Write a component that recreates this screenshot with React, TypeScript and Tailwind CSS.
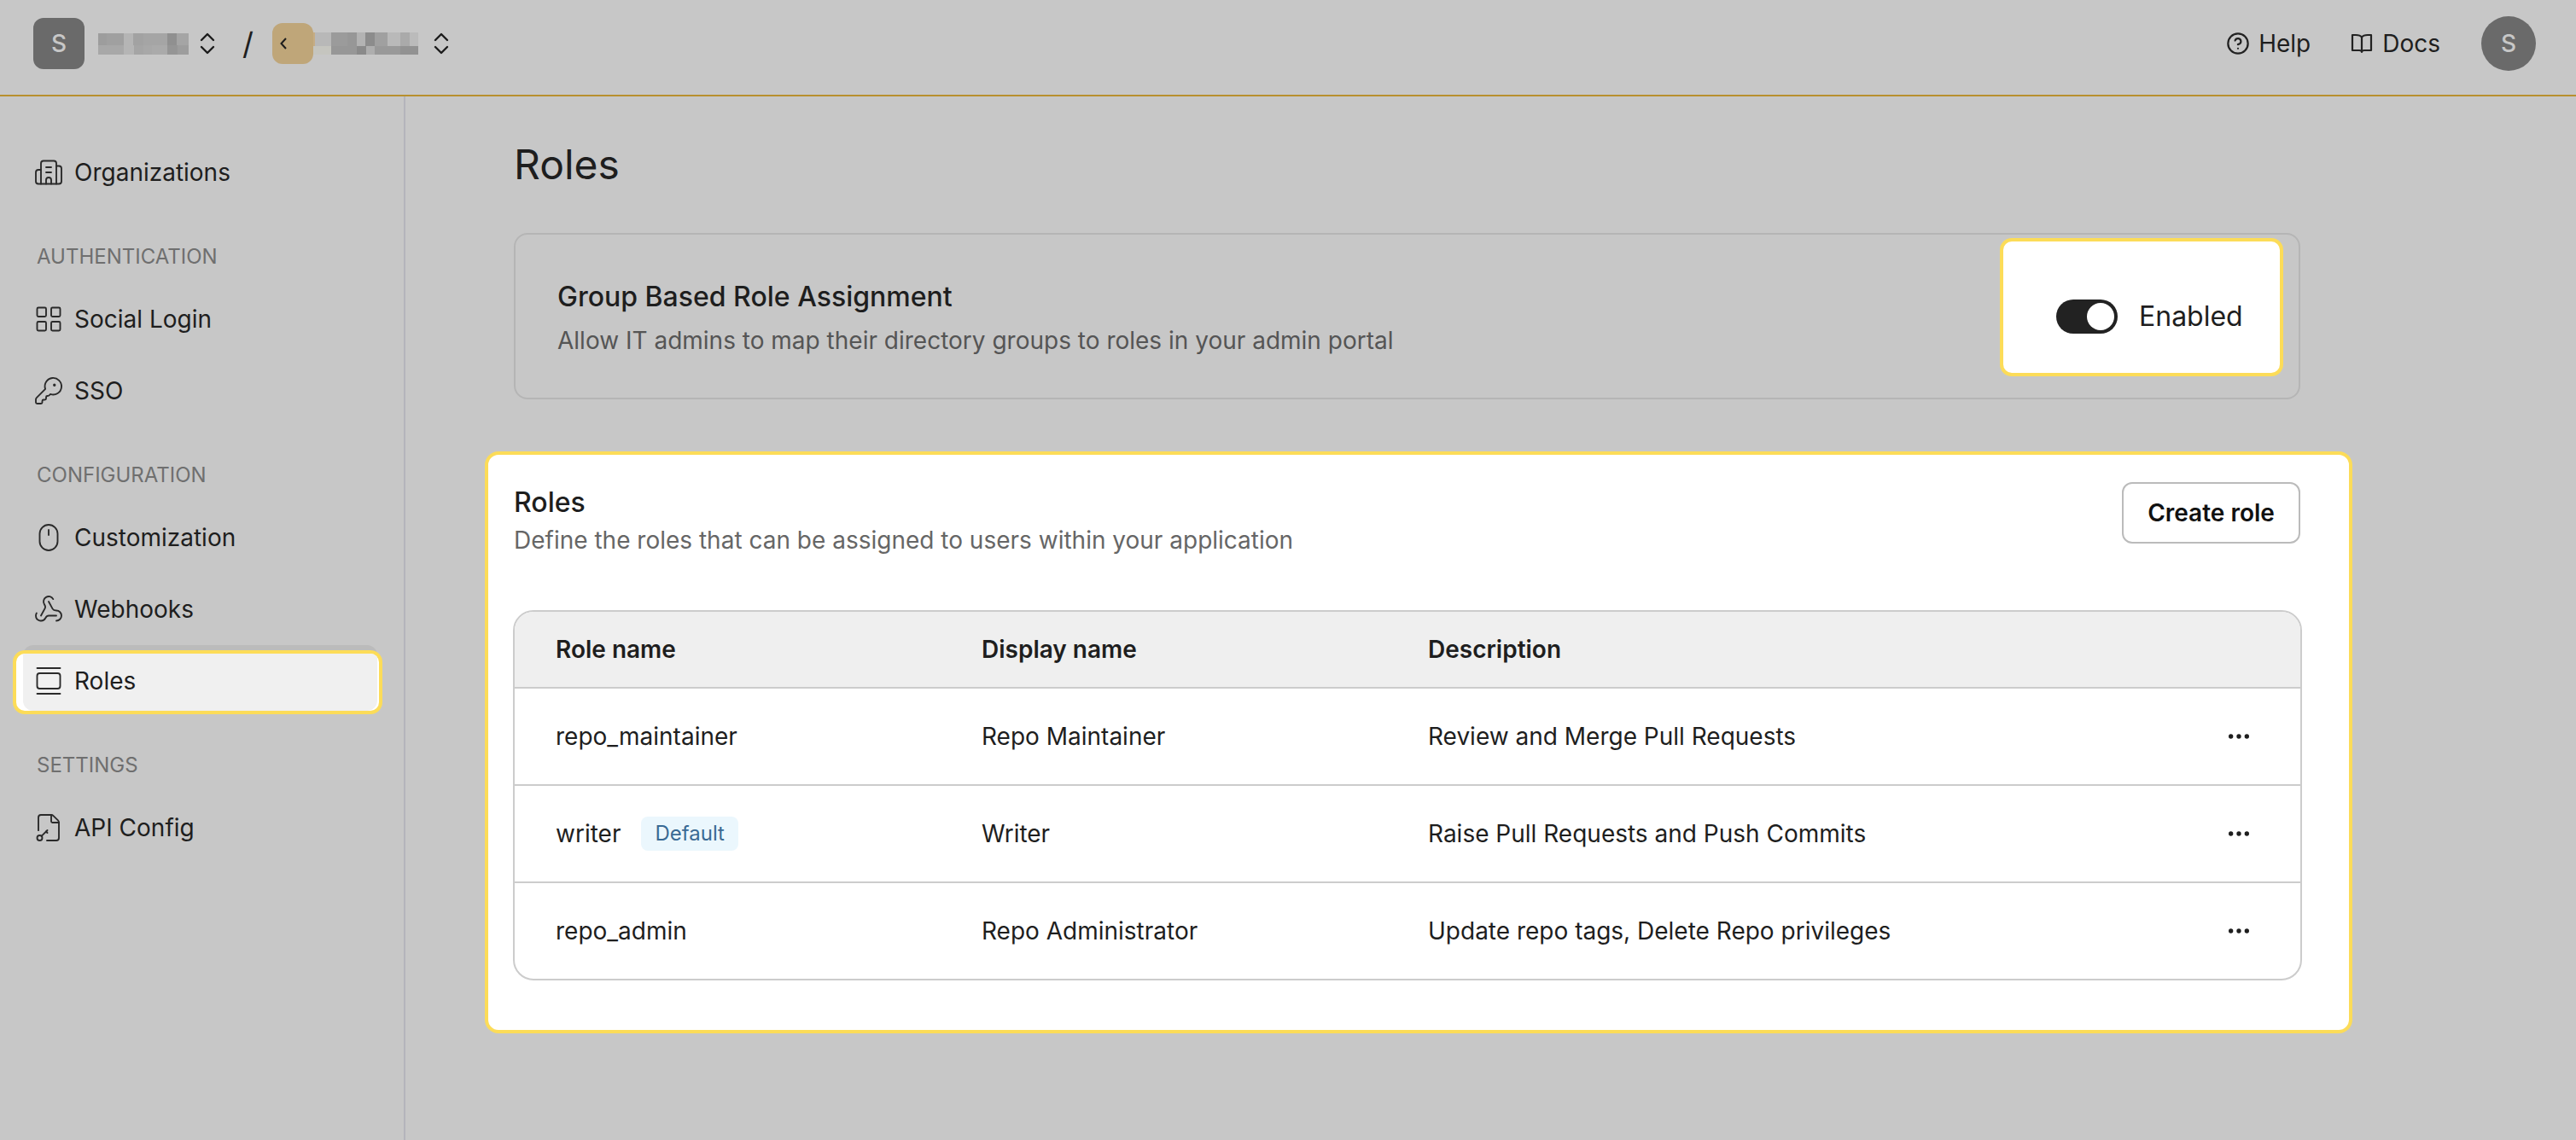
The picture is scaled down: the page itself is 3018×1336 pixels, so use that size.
import React from 'react';
import {
  Building2,
  LayoutGrid,
  KeyRound,
  Mouse,
  Webhook,
  GalleryVertical,
  FileKey2,
  CircleHelp,
  Ellipsis,
} from 'lucide-react';

const orgBlocks = [
  [[10, '#9d9d9d'], [20, '#a0a0a0'], [11, '#b5b5b5'], [12, '#a2a2a2'], [28, '#a5a5a5'], [11, '#909090'], [14, '#a5a5a5']],
  [[30, '#a8a8a8'], [12, '#b5b5b5'], [11, '#a5a5a5'], [10, '#a8a8a8'], [18, '#aaaaaa'], [12, '#959595'], [13, '#9d9d9d']],
] as [number, string][][];

const projectBlocks = [
  [[18, '#ae9468'], [14, '#c5ac84'], [19, '#b8b8b8'], [19, '#9b9b9b'], [11, '#979797'], [10, '#b3b3b3'], [11, '#8c8c8c'], [15, '#a0a0a0'], [15, '#b9b9b9'], [11, '#aaaaaa'], [10, '#bbbbbb']],
  [[29, '#ae9468'], [22, '#c5c5bf'], [30, '#979797'], [11, '#8a8a8a'], [10, '#aeaeae'], [30, '#999999'], [21, '#929292']],
] as [number, string][][];

const Mosaic = ({ rows, width, split, height }: { rows: [number, string][][]; width: number; split: number; height: number }) => (
  <svg width={width} height={height} className="block shrink-0">
    {rows.map((row, r) => {
      let x = 0;
      return row.map(([w, color], i) => {
        const rect = <rect key={`${r}-${i}`} x={x} y={r === 0 ? 0 : split} width={w} height={r === 0 ? split : height - split} fill={color} />;
        x += w;
        return rect;
      });
    })}
  </svg>
);

const UpDown = () => (
  <svg width="18" height="26" viewBox="0 0 18 26" fill="none" stroke="#1c1c1c" strokeWidth="2.4" strokeLinecap="round" strokeLinejoin="round" className="shrink-0">
    <path d="M2 9l7-7 7 7" />
    <path d="M2 17l7 7 7-7" />
  </svg>
);

const DocsIcon = () => (
  <svg width="26" height="24" viewBox="0 0 26 24" fill="none" stroke="#222" strokeWidth="2.2" strokeLinejoin="round" className="shrink-0">
    <path d="M13 4.5C11.5 2.5 9 2 6 2H2v18h8c1.5 0 3 .5 3 2 0-1.5 1.5-2 3-2h8V2h-4c-3 0-5.5.5-7 2.5Z" />
    <path d="M13 4.5V21" />
  </svg>
);

const NavItem = ({ icon: Icon, label }: { icon: any; label: string }) => (
  <div className="flex h-[76px] items-center gap-[12px] rounded-xl px-3 text-[28px] text-[#1e1e1e]">
    <Icon size={36} strokeWidth={1.25} className="shrink-0 text-[#2a2a2a]" />
    <span>{label}</span>
  </div>
);

const NavLabel = ({ children }: { children: React.ReactNode }) => (
  <div className="mt-[45px] mb-[19px] pl-4 text-[24px] leading-8 text-[#6f6f6f]">{children}</div>
);

const ActiveItem = () => (
  <div className="relative mt-2 h-[76px]">
    <div className="absolute inset-x-0 -top-1 h-[76px] rounded-xl bg-[#bbbbbb]" />
    <div className="absolute -left-3 top-[2px] h-[75px] w-[433px] overflow-hidden rounded-[14px] border-4 border-[#fcdc58] bg-white">
      <div className="absolute inset-y-0 left-2 right-[2px] rounded-b-xl bg-[#f0f0f0]" />
    </div>
    <div className="relative flex h-full items-center gap-[12px] px-3 text-[28px] text-[#1e1e1e]">
      <GalleryVertical size={36} strokeWidth={1.25} className="shrink-0 text-[#2a2a2a]" />
      <span>Roles</span>
    </div>
  </div>
);

const Sidebar = () => (
  <aside className="w-[475px] shrink-0 border-r-2 border-[#b4b4bb] pt-[51px] pl-[27px] pr-[31px]">
    <NavItem icon={Building2} label="Organizations" />
    <NavLabel>AUTHENTICATION</NavLabel>
    <div className="flex flex-col gap-2">
      <NavItem icon={LayoutGrid} label="Social Login" />
      <NavItem icon={KeyRound} label="SSO" />
    </div>
    <NavLabel>CONFIGURATION</NavLabel>
    <div className="flex flex-col gap-2">
      <NavItem icon={Mouse} label="Customization" />
      <NavItem icon={Webhook} label="Webhooks" />
    </div>
    <ActiveItem />
    <NavLabel>SETTINGS</NavLabel>
    <NavItem icon={FileKey2} label="API Config" />
  </aside>
);

const TopBar = () => (
  <header className="flex h-[113px] shrink-0 items-center justify-between border-b-2 border-[#b8902e] pr-[47px] pb-[9px] pl-[39px]">
    <div className="flex items-center">
      <div className="flex h-[60px] w-[60px] items-center justify-center rounded-xl bg-[#6a6a6a] text-[28px] font-medium text-[#c7c7c7]">S</div>
      <div className="ml-4">
        <Mosaic rows={orgBlocks} width={106} split={14} height={25} />
      </div>
      <div className="ml-[13px]"><UpDown /></div>
      <span className="ml-[32px] w-[11px] text-[36px] leading-none text-[#1e1e1e]">/</span>
      <div className="relative ml-6 flex h-12 w-12 items-center rounded-xl bg-[#bfa679] pl-[9px]">
        <svg width="8" height="14" viewBox="0 0 8 14" fill="none" stroke="#1c1c1c" strokeWidth="2">
          <path d="M7 1L1.5 7 7 13" />
        </svg>
      </div>
      <div className="-ml-[30px]">
        <Mosaic rows={projectBlocks} width={153} split={16} height={26} />
      </div>
      <div className="ml-[18px]"><UpDown /></div>
    </div>
    <div className="flex items-center text-[28px] text-[#1e1e1e]">
      <CircleHelp size={28} strokeWidth={1.9} className="text-[#222]" />
      <span className="ml-[10px]">Help</span>
      <div className="ml-[47px]"><DocsIcon /></div>
      <span className="ml-[11px]">Docs</span>
      <div className="ml-12 flex h-16 w-16 items-center justify-center rounded-full bg-[#6a6a6a] font-medium text-[#c7c7c7]">S</div>
    </div>
  </header>
);

const GroupCard = () => (
  <div className="flex h-[195px] items-start justify-between rounded-2xl border-2 border-[#b5b5b5] pl-[49px]">
    <div className="pt-[49px]">
      <h2 className="text-[32px] leading-12 font-medium text-[#1e1e1e]">Group Based Role Assignment</h2>
      <p className="mt-[7px] text-[28px] leading-10 text-[#555555]">Allow IT admins to map their directory groups to roles in your admin portal</p>
    </div>
    <div className="mt-1 mr-[18px] flex h-[162px] w-[332px] items-center gap-[25px] rounded-[14px] border-4 border-[#fcdc58] bg-white pt-[22px] pl-[62px]">
      <div className="flex h-10 w-[72px] items-center justify-end rounded-full bg-[#222222] p-1">
        <div className="h-8 w-8 rounded-full bg-white" />
      </div>
      <span className="text-[32px] text-[#1e1e1e]">Enabled</span>
    </div>
  </div>
);

const rows = [
  { name: 'repo_maintainer', display: 'Repo Maintainer', description: 'Review and Merge Pull Requests' },
  { name: 'writer', display: 'Writer', description: 'Raise Pull Requests and Push Commits', isDefault: true },
  { name: 'repo_admin', display: 'Repo Administrator', description: 'Update repo tags, Delete Repo privileges' },
];

const RolesPanel = () => (
  <section className="mt-[61px] -ml-[34px] h-[682px] w-[2188px] rounded-2xl border-4 border-[#fcdc58] bg-white pt-8 pr-[57px] pl-[30px]">
    <div className="flex items-start justify-between">
      <div className="pt-[2px]">
        <h2 className="text-[32px] leading-11 font-medium text-[#1e1e1e]">Roles</h2>
        <p className="mt-[2px] text-[28px] leading-10 text-[#666666]">Define the roles that can be assigned to users within your application</p>
      </div>
      <button className="h-[72px] w-[209px] rounded-xl border-2 border-[#bbbbbb] text-[28px] font-semibold text-[#111111]">Create role</button>
    </div>
    <div className="mt-[62px] -ml-px w-[2096px] overflow-hidden rounded-3xl border-2 border-[#cccccc] text-[28px] text-[#1e1e1e]">
      <div className="grid h-[90px] grid-cols-[499px_523px_1fr_32px] items-center border-b-2 border-[#cccccc] bg-[#efefef] pr-14 pl-12 font-semibold">
        <span>Role name</span>
        <span>Display name</span>
        <span>Description</span>
      </div>
      {rows.map((row, idx) => (
        <div
          key={row.name}
          className={`grid grid-cols-[499px_523px_1fr_32px] items-center pr-14 pl-12 ${idx < rows.length - 1 ? 'h-[114px] border-b-2 border-[#cccccc]' : 'h-[112px]'}`}
        >
          <div className="flex items-center">
            <span>{row.name}</span>
            {row.isDefault && (
              <span className="ml-6 flex h-10 items-center rounded-lg bg-[#ebf7fd] px-4 text-[24px] text-[#3a6a94]">Default</span>
            )}
          </div>
          <span>{row.display}</span>
          <span>{row.description}</span>
          <Ellipsis size={32} className="text-[#1e1e1e]" />
        </div>
      ))}
    </div>
  </section>
);

export default function App() {
  return (
    <div className="flex h-[1336px] w-[3018px] flex-col overflow-hidden bg-[#c7c7c7] font-['Inter',sans-serif]">
      <TopBar />
      <div className="flex flex-1">
        <Sidebar />
        <main className="pl-[127px]">
          <div className="w-[2093px] pt-[50px]">
            <h1 className="mb-[50px] text-[48px] leading-[60px] text-[#1e1e1e]">Roles</h1>
            <GroupCard />
            <RolesPanel />
          </div>
        </main>
      </div>
    </div>
  );
}
